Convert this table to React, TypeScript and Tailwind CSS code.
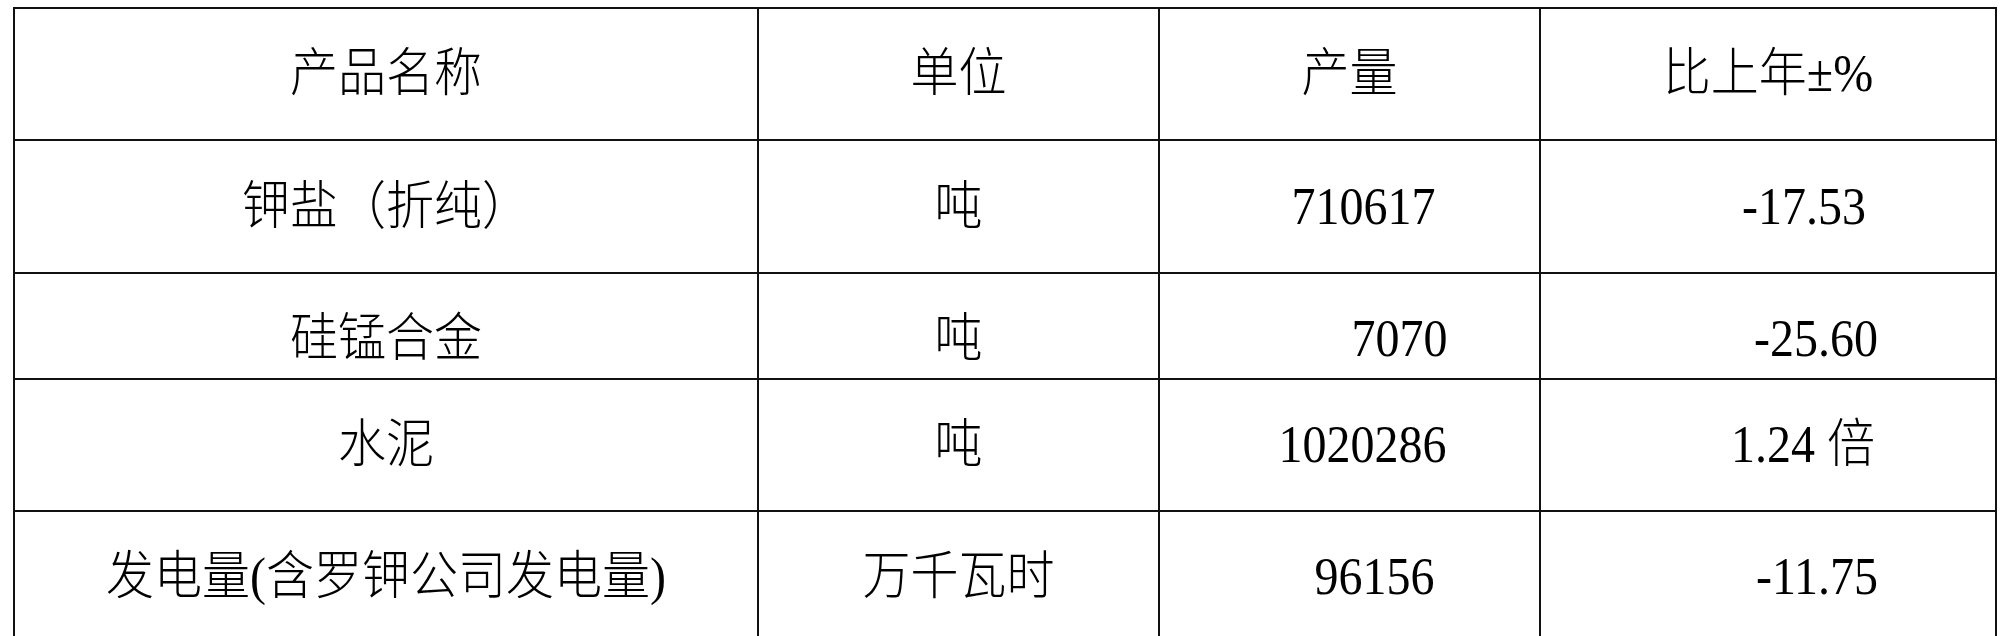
const rows: { h: string; pt?: string; cells: { text: string; shift?: string }[] }[] = [
  {
    h: 'h-[132px]',
    cells: [{ text: '产品名称' }, { text: '单位' }, { text: '产量' }, { text: '比上年±%' }],
  },
  {
    h: 'h-[133px]',
    cells: [
      { text: '钾盐（折纯）' },
      { text: '吨' },
      { text: '710617', shift: 'pl-[28px]' },
      { text: '-17.53', shift: 'pl-[72px]' },
    ],
  },
  {
    h: 'h-[106px]',
    pt: 'pt-[26px]',
    cells: [
      { text: '硅锰合金' },
      { text: '吨' },
      { text: '7070', shift: 'pl-[100px]' },
      { text: '-25.60', shift: 'pl-[96px]' },
    ],
  },
  {
    h: 'h-[132px]',
    cells: [
      { text: '水泥' },
      { text: '吨' },
      { text: '1020286', shift: 'pl-[26px]' },
      { text: '1.24 倍', shift: 'pl-[70px]' },
    ],
  },
  {
    h: 'h-[132px]',
    cells: [
      { text: '发电量(含罗钾公司发电量)' },
      { text: '万千瓦时' },
      { text: '96156', shift: 'pl-[50px]' },
      { text: '-11.75', shift: 'pl-[98px]' },
    ],
  },
];

export default function App() {
  return (
    <div className="w-[2000px] h-[636px] overflow-hidden bg-white pl-[13px] pt-[7px] text-black font-['Liberation_Serif','Noto_Sans_CJK_SC',serif]">
      <div className="grid w-[1984px] grid-cols-[744px_401px_381px_456px] border-l-2 border-t-2 border-[#111]">
        {rows.map((row, ri) =>
          row.cells.map((cell, ci) => (
            <div
              key={`${ri}-${ci}`}
              className={`${row.h} ${row.pt ?? ''} ${cell.shift ?? ''} flex items-center justify-center border-r-2 border-b-2 border-[#111] text-[48px] leading-none font-light whitespace-pre`}
            >
              <span className="inline-block scale-y-[1.08]">{cell.text}</span>
            </div>
          ))
        )}
      </div>
    </div>
  );
}
